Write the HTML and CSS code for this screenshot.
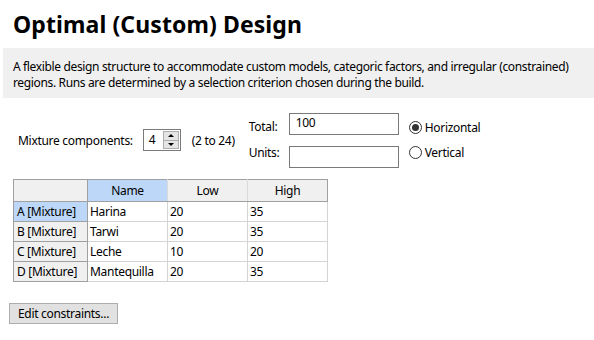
FILE: index.html
```html
<!DOCTYPE html>
<html lang="en">
<head>
    <meta charset="UTF-8">
    <title>Optimal (Custom) Design</title>
    <link rel="stylesheet" href="styles.css">
</head>
<body>
<div class="wizard">

    <h1 class="wizard--title">Optimal (Custom) Design</h1>

    <div class="wizard--desc">
        A flexible design structure to accommodate custom models, categoric factors, and irregular (constrained)
        regions. Runs are determined by a selection criterion chosen during the build.
    </div>

    <div class="wizard--settings">
        <div class="mix">
            <span class="mix--label">Mixture components:</span>
            <div class="spin">
                <span class="spin--value">4</span>
                <div class="spin--btns">
                    <span class="spin--btn"><i class="tri up"></i></span>
                    <span class="spin--btn"><i class="tri down"></i></span>
                </div>
            </div>
            <span class="mix--range">(2 to 24)</span>
        </div>

        <div class="totals">
            <div class="totals--row">
                <span class="totals--label">Total:</span>
                <div class="field">100</div>
            </div>
            <div class="totals--row">
                <span class="totals--label">Units:</span>
                <div class="field"></div>
            </div>
        </div>

        <div class="orient">
            <label class="radio"><span class="radio--dot checked"></span>Horizontal</label>
            <label class="radio"><span class="radio--dot"></span>Vertical</label>
        </div>
    </div>

    <table class="grid">
        <thead>
            <tr>
                <th class="corner"></th>
                <th class="sel">Name</th>
                <th>Low</th>
                <th>High</th>
            </tr>
        </thead>
        <tbody>
            <tr><th class="sel">A [Mixture]</th><td>Harina</td><td>20</td><td>35</td></tr>
            <tr><th>B [Mixture]</th><td>Tarwi</td><td>20</td><td>35</td></tr>
            <tr><th>C [Mixture]</th><td>Leche</td><td>10</td><td>20</td></tr>
            <tr><th>D [Mixture]</th><td>Mantequilla</td><td>20</td><td>35</td></tr>
        </tbody>
    </table>

    <button class="wizard--btn">Edit constraints...</button>

</div>
</body>
</html>
```

FILE: styles.css
```css
*, *:before, *:after {
    box-sizing: border-box;
    padding: 0;
    margin: 0;
}

body {
    background: #fff;
    color: #000;
    font-family: "Noto Sans", "Open Sans", sans-serif;
    font-size: 12px;
    letter-spacing: -0.3px;
    overflow: hidden;
}

.wizard {
    width: 594px;
    height: 340px;
}

.wizard--title {
    font-size: 23px;
    line-height: 28px;
    font-weight: bold;
    letter-spacing: 0.1px;
    padding: 10px 0 0 13px;
    height: 48px;
}

.wizard--desc {
    margin-left: 3px;
    background: #f0f0f0;
    padding: 11px 10px 7px 10px;
    line-height: 16px;
    letter-spacing: -0.35px;
    height: 50px;
}

/* settings row */
.wizard--settings {
    display: flex;
    align-items: flex-start;
    padding: 15px 0 0 18px;
    height: 81px;
}

.mix {
    display: flex;
    align-items: center;
    margin-top: 16px;
}

.mix--label {
    margin-right: 10px;
}

.spin {
    display: flex;
    width: 38px;
    height: 22px;
    border: 1px solid #7a7a7a;
    padding: 1px 1px 1px 5px;
}

.spin--value {
    flex: 1;
    line-height: 18px;
}

.spin--btns {
    display: flex;
    flex-direction: column;
    width: 16px;
}

.spin--btn {
    flex: 1;
    display: flex;
    align-items: center;
    justify-content: center;
    background: #e5e5e5;
    border: 1px solid #adadad;
}

.spin--btn + .spin--btn {
    border-top: 0;
}

.tri {
    width: 0;
    height: 0;
    border-left: 3px solid transparent;
    border-right: 3px solid transparent;
}

.tri.up {
    border-bottom: 3px solid #000;
}

.tri.down {
    border-top: 3px solid #000;
}

.mix--range {
    margin-left: 11px;
}

.totals {
    margin-left: 14px;
    display: flex;
    flex-direction: column;
    gap: 8px;
}

.totals--row {
    display: flex;
    align-items: flex-start;
}

.totals--label {
    width: 40px;
    line-height: 22px;
    padding-top: 3px;
}

.totals--row:last-child .totals--label {
    padding-top: 0;
    margin-top: -4px;
}

.field {
    width: 110px;
    height: 22px;
    border: 1px solid #7a7a7a;
    padding: 0 6px;
    line-height: 18px;
}

.orient {
    margin-left: 10px;
    margin-top: 6px;
    display: flex;
    flex-direction: column;
    gap: 8px;
}

.radio {
    display: flex;
    align-items: center;
    line-height: 17px;
}

.radio--dot {
    width: 13px;
    height: 13px;
    border: 1px solid #333;
    border-radius: 50%;
    margin-right: 3px;
    display: flex;
    align-items: center;
    justify-content: center;
}

.radio--dot.checked:after {
    content: "";
    width: 7px;
    height: 7px;
    border-radius: 50%;
    background: #333;
}

/* factor grid */
.grid {
    margin-left: 13px;
    border-collapse: collapse;
    border: 1px solid #a0a0a0;
}

.grid th, .grid td {
    font-weight: normal;
    height: 20px;
    padding: 0 2px;
    line-height: 18px;
    white-space: nowrap;
}

.grid thead th {
    height: 22px;
    width: 80px;
    background: #f0f0f0;
    text-align: center;
    border-left: 1px solid #dadada;
    border-bottom: 1px solid #a0a0a0;
}

.grid thead th.corner {
    width: 74px;
    border-left: 0;
    border-right: 1px solid #a0a0a0;
}

.grid tbody th {
    background: #f0f0f0;
    text-align: left;
    padding-left: 3px;
    border-right: 1px solid #a0a0a0;
    border-bottom: 1px solid #a0a0a0;
}

.grid tbody tr:last-child th {
    border-bottom: 0;
}

.grid thead th.sel,
.grid tbody th.sel {
    background: #bcd7f8;
}

.grid td {
    border-right: 1px solid #d4d4d4;
    border-bottom: 1px solid #d4d4d4;
}

.wizard--btn {
    display: block;
    margin: 21px 0 0 9px;
    width: 109px;
    height: 21px;
    background: #e1e1e1;
    border: 1px solid #adadad;
    font-family: inherit;
    font-size: 12px;
    letter-spacing: -0.3px;
    color: #000;
}
```
